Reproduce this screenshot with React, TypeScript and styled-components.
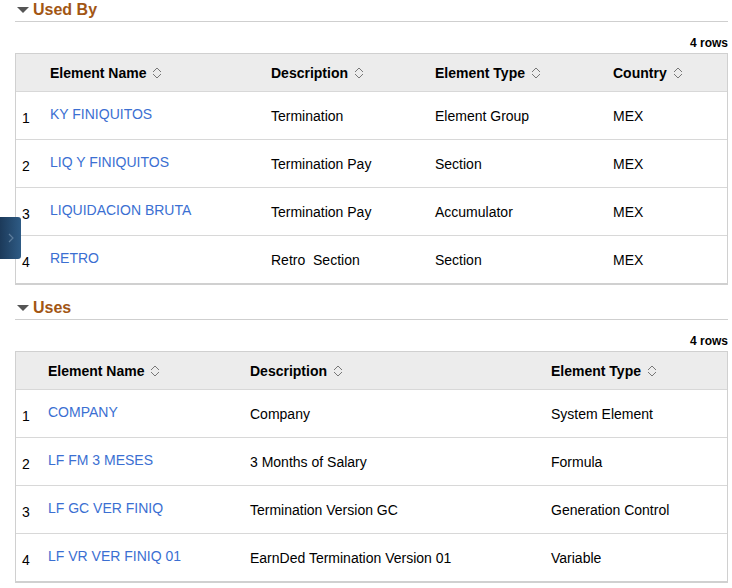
import React from "react";
import styled, { createGlobalStyle } from "styled-components";

const Global = createGlobalStyle`
  html, body { margin: 0; background: #fff; }
  body { font-family: Arial, "Liberation Sans", sans-serif; font-size: 14px; color: #000; }
`;

const Page = styled.div`
  padding: 0 4px 0 15px;
  width: 713px;
  position: relative;
`;

const SectionHead = styled.div<{ $top: number }>`
  margin-top: ${(p) => p.$top}px;
  height: 22px;
  border-bottom: 1px solid #cfcfcf;
  display: flex;
  align-items: center;
  gap: 4px;
  color: #a25614;
  font-weight: bold;
  font-size: 16px;
  padding-left: 2px;
  box-sizing: border-box;
  padding-bottom: 2px;
`;

const Caret = styled.span`
  width: 0;
  height: 0;
  border-left: 6px solid transparent;
  border-right: 6px solid transparent;
  border-top: 6px solid #555;
`;

const RowCount = styled.div`
  text-align: right;
  font-size: 12px;
  font-weight: bold;
  height: 31px;
  line-height: 42px;
  padding-right: 0;
`;

const Table = styled.div`
  border: 1px solid #d0d0d0;
  border-bottom: 2px solid #d0d0d0;
`;

const Row = styled.div<{ $cols: string; $head?: boolean }>`
  display: grid;
  grid-template-columns: ${(p) => p.$cols};
  height: ${(p) => (p.$head ? 37 : 47)}px;
  align-items: center;
  background: ${(p) => (p.$head ? "#ececec" : "#fff")};
  border-bottom: 1px solid #d8d8d8;
  font-weight: ${(p) => (p.$head ? "bold" : "normal")};
  &:last-child { border-bottom: none; }
`;

const Num = styled.span`
  padding-left: 6px;
  padding-top: 4px;
`;

const Cell = styled.span`
  padding-top: 1px;
  display: flex;
  align-items: center;
  gap: 6px;
`;

const LinkCell = styled.a`
  color: #3b6fd2;
  text-decoration: none;
  margin-top: -4px;
`;

const Sort = () => (
  <svg width="10" height="12" viewBox="0 0 10 12">
    <path d="M1 5 L5 1 L9 5 M1 7 L5 11 L9 7" fill="none" stroke="#777" strokeWidth="1" />
  </svg>
);

const Handle = styled.div`
  position: absolute;
  left: 0;
  top: 217px;
  width: 21px;
  height: 42px;
  background: linear-gradient(90deg, #1c3a5a, #2e5b85);
  border-radius: 0 3px 3px 0;
  display: flex;
  align-items: center;
  justify-content: center;
`;

const usedBy = [
  ["KY FINIQUITOS", "Termination", "Element Group", "MEX"],
  ["LIQ Y FINIQUITOS", "Termination Pay", "Section", "MEX"],
  ["LIQUIDACION BRUTA", "Termination Pay", "Accumulator", "MEX"],
  ["RETRO", "Retro\u00a0 Section", "Section", "MEX"],
];
const uses = [
  ["COMPANY", "Company", "System Element"],
  ["LF FM 3 MESES", "3 Months of Salary", "Formula"],
  ["LF GC VER FINIQ", "Termination Version GC", "Generation Control"],
  ["LF VR VER FINIQ 01", "EarnDed Termination Version 01", "Variable"],
];

const cols1 = "34px 221px 164px 178px 1fr";
const cols2 = "32px 202px 301px 1fr";

const Grid = ({ cols, heads, rows }: { cols: string; heads: string[]; rows: string[][] }) => (
  <Table>
    <Row $cols={cols} $head>
      <span />
      {heads.map((h) => (
        <Cell key={h}>
          {h} <Sort />
        </Cell>
      ))}
    </Row>
    {rows.map((r, i) => (
      <Row $cols={cols} key={i}>
        <Num>{i + 1}</Num>
        <LinkCell href="#">{r[0]}</LinkCell>
        {r.slice(1).map((c, j) => (
          <Cell key={j}>{c}</Cell>
        ))}
      </Row>
    ))}
  </Table>
);

export default function App() {
  return (
    <>
      <Global />
      <Page>
        <SectionHead $top={0}>
          <Caret /> Used By
        </SectionHead>
        <RowCount>4 rows</RowCount>
        <Grid cols={cols1} heads={["Element Name", "Description", "Element Type", "Country"]} rows={usedBy} />
        <SectionHead $top={13}>
          <Caret /> Uses
        </SectionHead>
        <RowCount>4 rows</RowCount>
        <Grid cols={cols2} heads={["Element Name", "Description", "Element Type"]} rows={uses} />
      </Page>
      <Handle>
        <svg width="6" height="10" viewBox="0 0 6 10">
          <path d="M1 1 L5 5 L1 9" fill="none" stroke="#5d7d9c" strokeWidth="1.2" />
        </svg>
      </Handle>
    </>
  );
}
